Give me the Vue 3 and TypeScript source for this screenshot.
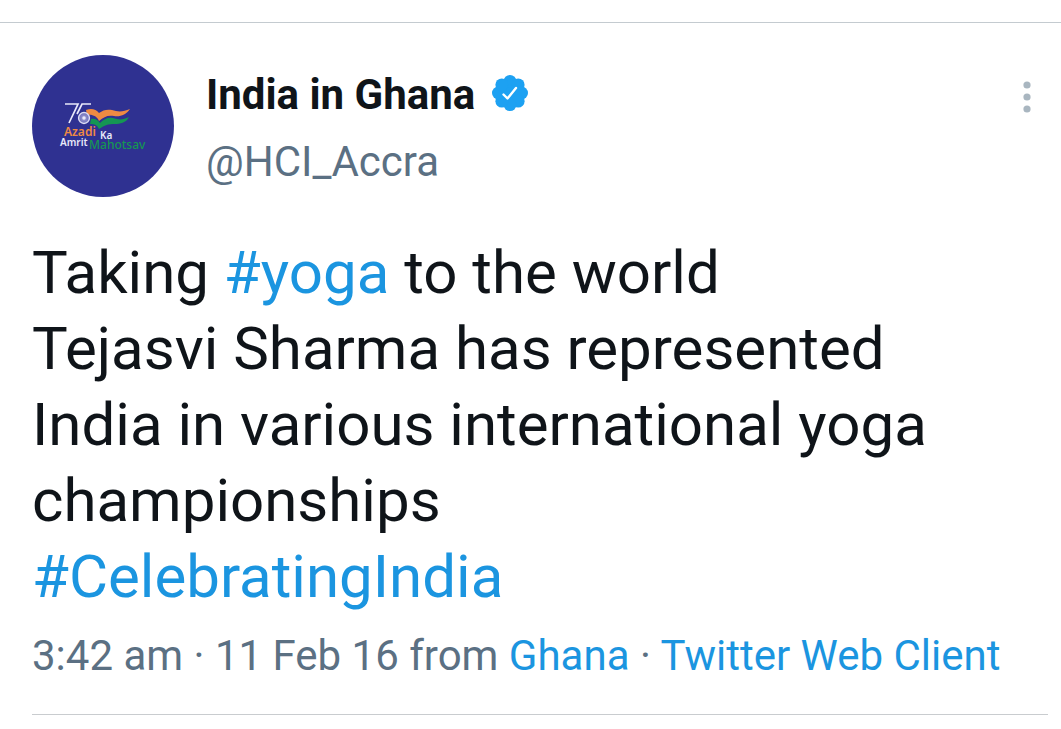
<script setup lang="ts">
interface Segment {
  text: string
  href?: string
}

const name = 'India in Ghana'
const handle = '@HCI_Accra'

const lines: Segment[][] = [
  [{ text: 'Taking ' }, { text: '#yoga', href: '#yoga' }, { text: ' to the world' }],
  [{ text: 'Tejasvi Sharma has represented India in various international yoga championships' }],
  [{ text: '#CelebratingIndia', href: '#CelebratingIndia' }],
]

const lobes = Array.from({ length: 8 }, (_, i) => {
  const a = (i * Math.PI) / 4
  return { x: 18 + 11.6 * Math.sin(a), y: 18 - 11.6 * Math.cos(a) }
})

const spokes = Array.from({ length: 12 }, (_, i) => i * 15)
</script>

<template>
  <main class="page">
    <article class="tweet">
      <header class="head">
        <a class="avatar" href="#profile" aria-label="India in Ghana profile">
          <svg viewBox="0 0 142 142" aria-hidden="true">
            <circle cx="71" cy="71" r="71" fill="#2f3191" />
            <g fill="none" stroke="#e9e9fa" stroke-width="1.7">
              <path d="M33 49H46L37 68" />
              <path d="M59 49H50L45 59" />
            </g>
            <path fill="#ef8a43" d="M54 55C59 53 64 54 67 58C71 55 75 54 80 55C86 57 91 57 98 54C94 60 88 62 82 61C75 60 72 62 67 66C65 61 60 59 55 60Z" />
            <path fill="#159653" d="M59 64C63 63 66 65 68 68C72 64 76 62 81 63C87 65 91 65 97 62C94 68 88 69 83 69C76 69 73 70 67 74C65 70 63 69 58 69Z" />
            <circle cx="52" cy="63" r="5.4" fill="#5a5bb0" stroke="#dcdcf4" stroke-width="1.5" />
            <g stroke="#b9b9e2" stroke-width="0.4">
              <line v-for="s in spokes" :key="s" x1="47" y1="63" x2="57" y2="63" :transform="`rotate(${s} 52 63)`" />
            </g>
            <circle cx="52" cy="63" r="1.7" fill="#e9e9fa" />
            <g class="logo-text">
              <text x="32" y="81" font-size="12" fill="#ef8a43">Azadi</text>
              <text x="68" y="84" font-size="10" fill="#e9e9fa">Ka</text>
              <text x="28" y="91" font-size="10" fill="#e9e9fa">Amrit</text>
              <text class="wide" x="57" y="94" font-size="12" fill="#159653">Mahotsav</text>
            </g>
          </svg>
        </a>
        <div class="who">
          <h1 class="name">
            <span>{{ name }}</span>
            <svg class="badge" viewBox="0 0 36 36" role="img" aria-label="Verified account">
              <g fill="#1da1f2">
                <circle cx="18" cy="18" r="14" />
                <circle v-for="(l, i) in lobes" :key="i" :cx="l.x" :cy="l.y" r="6.4" />
              </g>
              <path d="M11.5 19.5L15.5 23.5L24 13" fill="none" stroke="#fff" stroke-width="2.4" stroke-linecap="round" stroke-linejoin="round" />
            </svg>
          </h1>
          <a class="handle" href="#profile">{{ handle }}</a>
        </div>
        <button class="more" type="button" aria-label="More options">
          <svg viewBox="0 0 8 32" aria-hidden="true">
            <circle cx="4" cy="4" r="3.6" />
            <circle cx="4" cy="16" r="3.6" />
            <circle cx="4" cy="28" r="3.6" />
          </svg>
        </button>
      </header>

      <div class="body">
        <p v-for="(line, i) in lines" :key="i">
          <template v-for="(s, j) in line" :key="j">
            <a v-if="s.href" :href="s.href">{{ s.text }}</a>
            <template v-else>{{ s.text }}</template>
          </template>
        </p>
      </div>

      <p class="meta">
        <time datetime="2016-02-11T03:42">3:42 am · 11 Feb 16</time> from <a href="#ghana">Ghana</a> · <a href="#client">Twitter Web Client</a>
      </p>
    </article>
  </main>
</template>

<style>
body {
  margin: 0;
  background: #fff;
}
</style>

<style scoped>
.page {
  padding-top: 22px;
  font-family: Roboto, "Noto Sans", sans-serif;
  color: #0f1419;
}
.tweet {
  border-top: 1px solid #c4cbd0;
  padding: 32px 13px 0 32px;
}
a {
  color: #1b95e0;
  text-decoration: none;
}
p {
  margin: 0;
}
.head {
  display: flex;
  align-items: flex-start;
}
.avatar {
  flex: none;
  width: 142px;
  height: 142px;
}
.avatar svg,
.more svg,
.badge {
  display: block;
}
.logo-text {
  font-family: "Noto Sans", sans-serif;
  font-weight: 600;
}
.wide {
  font-weight: 500;
}
.who {
  flex: 1;
  min-width: 0;
  padding: 15px 0 0 32px;
  font-size: 42px;
  line-height: 50px;
}
.name {
  display: flex;
  align-items: flex-start;
  gap: 17px;
  margin: 0 0 17px;
  font-size: 42px;
  font-weight: 700;
}
.badge {
  width: 36px;
  height: 36px;
  margin-top: 5px;
}
.handle {
  display: block;
  color: #5b7083;
}
.more {
  margin: 18px 9px 0 0;
  padding: 8px;
  border: 0;
  background: none;
  cursor: pointer;
}
.more svg {
  width: 8px;
  height: 32px;
  fill: #a9b6c0;
}
.body {
  padding: 38px 20px 0 0;
  font-size: 60px;
  line-height: 76px;
}
.meta {
  padding: 16px 0 33px;
  border-bottom: 1px solid #c9cccf;
  color: #5b7083;
  font-size: 42px;
  line-height: 50px;
}
</style>
